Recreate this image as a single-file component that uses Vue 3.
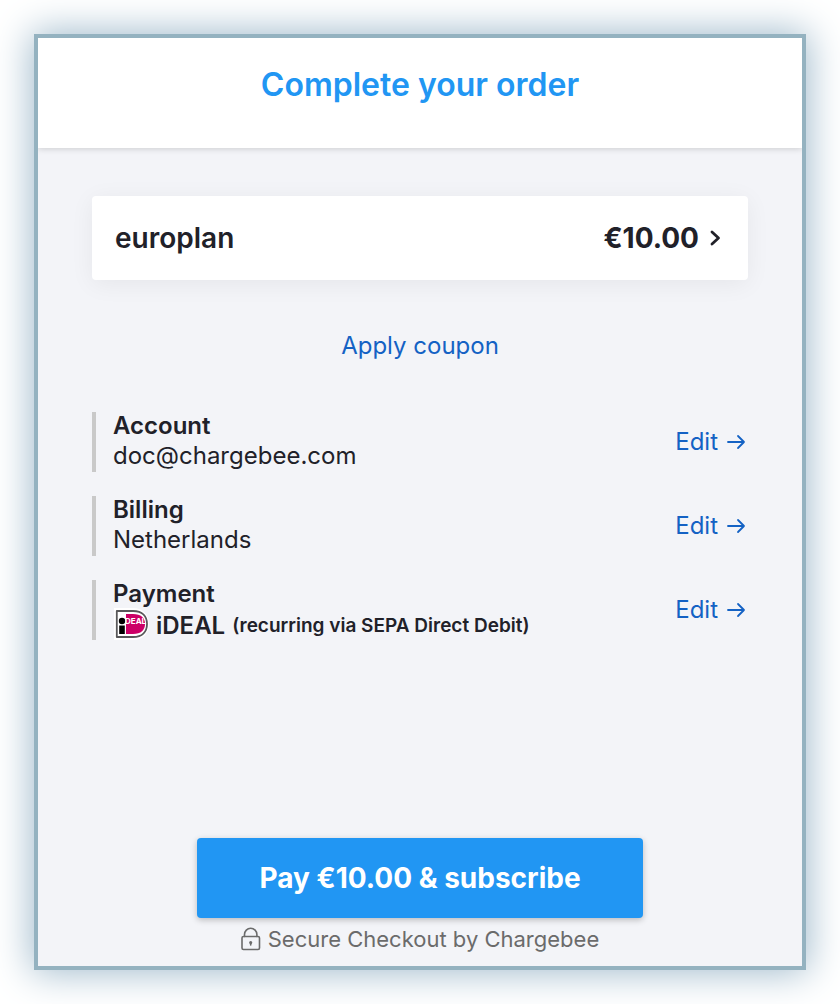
<script setup>
const details = [
  { id: 'account', title: 'Account', value: 'doc@chargebee.com' },
  { id: 'billing', title: 'Billing', value: 'Netherlands' },
  { id: 'payment', title: 'Payment', value: 'iDEAL', note: '(recurring via SEPA Direct Debit)' },
]
</script>

<template>
  <div class="page">
    <main class="checkout">
      <header class="header">
        <h1>Complete your order</h1>
      </header>

      <div class="body">
        <button type="button" class="plan">
          <span class="plan-name">europlan</span>
          <span class="plan-price">€10.00</span>
          <svg class="chevron" width="12" height="16" viewBox="0 0 12 16" aria-hidden="true">
            <path d="M2 2l6.5 6L2 14" />
          </svg>
        </button>

        <a class="link coupon" href="#coupon">Apply coupon</a>

        <section v-for="item in details" :key="item.id" class="detail">
          <div class="detail-text">
            <h2>{{ item.title }}</h2>
            <p v-if="item.note" class="method">
              <svg class="ideal" width="36" height="32" viewBox="0 0 36 32" aria-hidden="true">
                <path d="M1 0H20C30 0 36 7 36 16S30 32 20 32H1Z" fill="#fff" />
                <path d="M3.800 3H20C29.500 3 34 8.500 34 16S29.500 29 20 29H3.800Z" fill="#fff" stroke="#58585a" stroke-width="1.800" />
                <path d="M13 6H20C28 6 32 10 32 16S28 26 20 26H13Z" fill="#cc0066" />
                <circle cx="9" cy="13" r="3.200" fill="#000" />
                <rect x="6.200" y="17.500" width="5.600" height="8.500" fill="#000" />
                <text x="12" y="16">DEAL</text>
              </svg>
              <span>{{ item.value }}</span>
              <small>{{ item.note }}</small>
            </p>
            <p v-else>{{ item.value }}</p>
          </div>
          <a class="link edit" :href="'#' + item.id" :aria-label="'Edit ' + item.title">
            Edit
            <svg width="20" height="16" viewBox="0 0 20 16" aria-hidden="true">
              <path d="M2 8H18M12 2L18 8l-6 6" />
            </svg>
          </a>
        </section>

        <footer class="footer">
          <button type="button" class="pay">Pay €10.00 &amp; subscribe</button>
          <p class="secure">
            <svg width="20" height="24" viewBox="0 0 20 24" aria-hidden="true">
              <rect x="1" y="9.500" width="17.500" height="13" rx="1.500" />
              <path d="M3.500 9.500V7.500a6.200 6.200 0 0 1 12.400 0v2" />
              <circle cx="9.700" cy="15.500" r="0.800" />
              <path d="M9.700 16v2" />
            </svg>
            Secure Checkout by Chargebee
          </p>
        </footer>
      </div>
    </main>
  </div>
</template>

<style>
body {
  margin: 0;
  background: #fff;
}
</style>

<style scoped>
.page {
  box-sizing: border-box;
  display: flex;
  min-height: 100vh;
  padding: 34px;
  font-family: Inter, "Liberation Sans", sans-serif;
  font-size: 24px;
  line-height: 30px;
  color: #212129;
}

h1,
h2,
p {
  margin: 0;
}

button {
  border: 0;
  font-family: inherit;
  color: inherit;
  cursor: pointer;
}

.checkout {
  flex: 1;
  display: flex;
  flex-direction: column;
  min-width: 0;
  border: 4px solid #94b2c0;
  background: #f3f4f8;
  box-shadow: 0 0 36px 2px #9db8ca;
}

.header {
  position: relative;
  padding: 27px 24px 43px;
  background: #fff;
  box-shadow: 0 1px 6px rgba(0, 0, 0, 0.16);
  clip-path: inset(0 0 -8px 0);
  text-align: center;
}

h1 {
  font-size: 32px;
  line-height: 40px;
  font-weight: 600;
  color: #2196f3;
}

.body {
  flex: 1;
  display: flex;
  flex-direction: column;
  padding: 48px 54px 12px;
}

.plan {
  display: flex;
  align-items: center;
  padding: 24px 26px 24px 23px;
  border-radius: 4px;
  background: #fff;
  box-shadow: 0 4px 24px rgba(0, 0, 0, 0.06);
  font-size: 28px;
  line-height: 36px;
  text-align: left;
}

.plan-name {
  flex: 1;
  font-weight: 600;
}

.plan-price {
  font-weight: 700;
}

svg {
  flex: none;
  fill: none;
  stroke: currentColor;
  stroke-linecap: round;
  stroke-linejoin: round;
}

.chevron {
  margin-left: 11px;
  stroke-width: 2.800;
}

.link {
  color: #1462c4;
  text-decoration: none;
}

.coupon {
  align-self: center;
  margin: 51px 0;
}

.detail {
  display: flex;
  align-items: center;
  justify-content: space-between;
  margin-bottom: 24px;
  padding-left: 17px;
  border-left: 4px solid #c9c9c9;
}

.detail-text {
  height: 60px;
}

h2 {
  font-size: 24px;
  line-height: 28px;
  font-weight: 600;
}

.detail p {
  line-height: 32px;
}

.detail .method {
  display: flex;
  align-items: center;
  gap: 7px;
  font-weight: 600;
  line-height: 36px;
}

.ideal {
  align-self: flex-start;
  stroke: none;
}

.ideal text {
  font-size: 8px;
  font-weight: 700;
  line-height: 8px;
  fill: #fff;
}

small {
  font-size: 19px;
}

.edit {
  display: flex;
  align-items: center;
  gap: 8px;
  padding-right: 2px;
}

.edit svg {
  stroke-width: 1.800;
}

.footer {
  display: flex;
  flex-direction: column;
  align-items: center;
  margin-top: auto;
}

.pay {
  padding: 22px 62px;
  border-radius: 4px;
  background: #2196f3;
  box-shadow: 0 2px 6px rgba(0, 0, 0, 0.24);
  font-size: 28px;
  line-height: 36px;
  font-weight: 700;
  color: #fff;
}

.secure {
  display: flex;
  align-items: center;
  gap: 7px;
  margin-top: 6px;
  font-size: 22px;
  color: #6b6b6b;
}

.secure svg {
  stroke-width: 1.600;
}
</style>
